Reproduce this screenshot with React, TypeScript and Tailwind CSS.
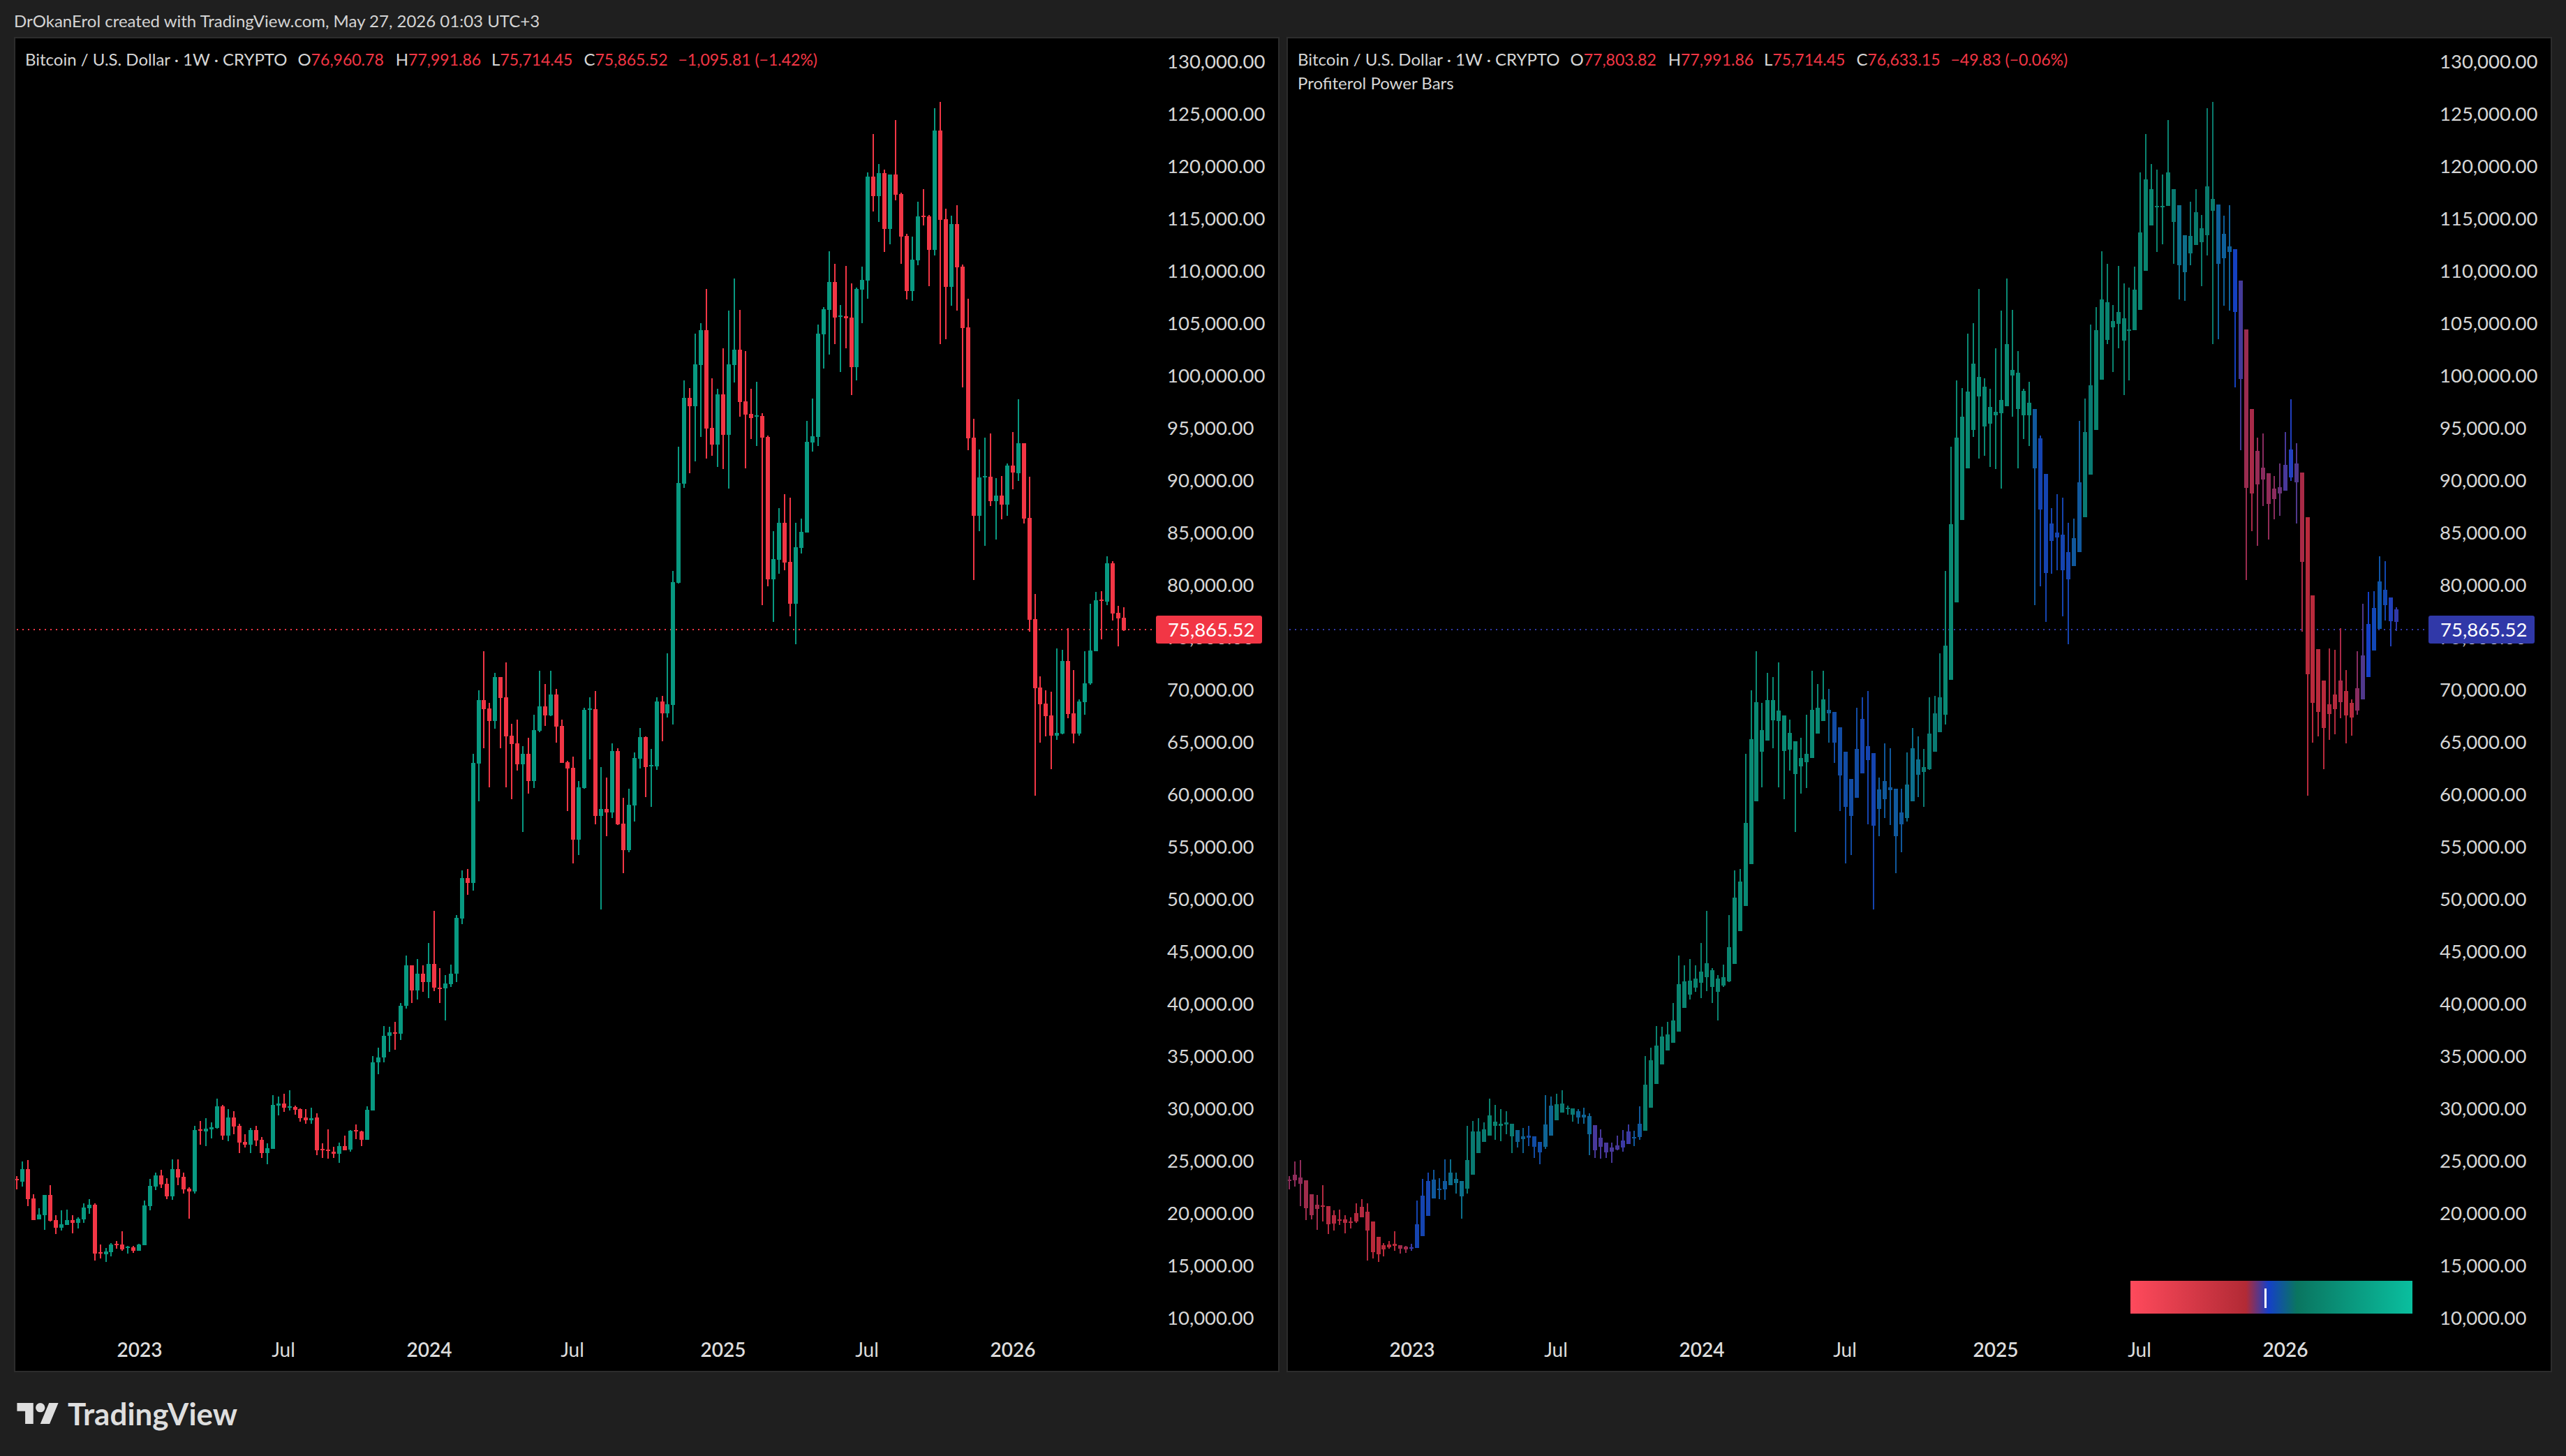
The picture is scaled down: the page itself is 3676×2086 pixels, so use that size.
type Candle = { up: number; h: number; t: number; b: number; l: number };
type Row = number[];

const GREEN = "#089981";
const RED = "#f23645";
const INDIGO = "#3038a8";

// rows are [up, high, bodyTop, bodyBottom, low], read off in screen px
const read = (rows: Row[], top: number, k: number): Candle[] =>
  rows.map(([up, h, t, b, l]) => ({
    up,
    h: Math.round(top + h / k),
    t: Math.round(top + t / k),
    b: Math.round(top + b / k),
    l: Math.round(top + l / k),
  }));

const candles: Candle[] = [
  ...read(
    [
      [0, 1157, 1166, 1171, 1207], [1, 1100, 1129, 1177, 1196], [0, 1095, 1129, 1244, 1270], [0, 1225, 1241, 1323, 1323],
      [1, 1278, 1302, 1321, 1321], [1, 1228, 1228, 1305, 1361], [0, 1191, 1228, 1327, 1329], [0, 1305, 1323, 1353, 1377],
      [1, 1286, 1339, 1353, 1363], [1, 1284, 1323, 1342, 1342], [0, 1305, 1323, 1334, 1374], [1, 1313, 1318, 1334, 1355],
      [1, 1260, 1276, 1321, 1334], [1, 1244, 1265, 1278, 1300], [0, 1260, 1265, 1451, 1478], [0, 1417, 1445, 1450, 1470],
      [1, 1430, 1442, 1454, 1483], [1, 1411, 1417, 1446, 1462], [0, 1403, 1414, 1418, 1432], [0, 1366, 1417, 1436, 1440],
      [1, 1422, 1425, 1428, 1451], [0, 1422, 1427, 1440, 1448], [1, 1414, 1417, 1440, 1440], [1, 1249, 1268, 1419, 1419],
      [1, 1167, 1193, 1270, 1286], [1, 1143, 1153, 1196, 1209], [0, 1132, 1153, 1188, 1201], [0, 1164, 1185, 1233, 1244],
      [1, 1092, 1129, 1233, 1246], [0, 1092, 1129, 1161, 1191], [0, 1143, 1159, 1207, 1223], [0, 1199, 1204, 1215, 1318],
      [1, 965, 981, 1215, 1223], [0, 946, 978, 983, 1036], [1, 935, 975, 987, 1042], [1, 951, 970, 977, 1013],
      [1, 861, 890, 973, 975], [0, 885, 890, 1002, 1018], [1, 901, 933, 1002, 1023], [0, 909, 933, 967, 997],
      [0, 957, 965, 1029, 1068], [0, 997, 1026, 1036, 1047], [1, 973, 981, 1036, 1068], [0, 965, 981, 1021, 1042],
      [0, 1007, 1018, 1068, 1087], [1, 1031, 1050, 1068, 1111], [1, 849, 885, 1052, 1052], [1, 853, 881, 887, 925],
      [0, 842, 881, 897, 912], [1, 829, 890, 894, 906], [0, 888, 894, 903, 922], [0, 898, 901, 935, 949],
      [0, 901, 933, 943, 957], [1, 896, 935, 943, 957], [0, 917, 933, 1058, 1076], [0, 1031, 1052, 1057, 1087],
      [0, 978, 1055, 1059, 1090], [0, 1044, 1063, 1071, 1087], [1, 1029, 1042, 1071, 1106], [0, 1002, 1042, 1057, 1057],
      [1, 982, 983, 1055, 1063], [0, 959, 981, 986, 1015], [0, 983, 986, 1018, 1042], [1, 890, 904, 1018, 1018],
      [1, 699, 723, 906, 906],
    ],
    1250,
    2.658,
  ),
  ...read(
    [
      [1, 1501, 1515, 1522, 1539], [1, 1470, 1484, 1515, 1522], [1, 1471, 1479, 1484, 1507], [0, 1464, 1479, 1481, 1504],
      [1, 1437, 1441, 1481, 1490], [1, 1369, 1383, 1441, 1445], [0, 1383, 1383, 1419, 1437], [1, 1374, 1395, 1419, 1432],
      [0, 1383, 1395, 1407, 1421], [1, 1351, 1381, 1407, 1430], [0, 1305, 1381, 1415, 1420], [0, 1387, 1415, 1417, 1437],
      [1, 1397, 1409, 1416, 1462], [1, 1382, 1395, 1410, 1414], [1, 1311, 1315, 1395, 1407],
    ],
    0,
    1,
  ),
  ...read(
    [
      [1, 1101, 1134, 1308, 1332], [0, 1095, 1134, 1155, 1206], [1, 600, 639, 1155, 1188], [1, 327, 369, 642, 804],
      [0, 159, 369, 408, 576], [0, 381, 405, 459, 744], [1, 252, 270, 459, 492], [0, 270, 270, 360, 576],
      [0, 207, 357, 525, 744], [0, 471, 522, 558, 795], [0, 453, 555, 645, 672], [1, 567, 600, 645, 936],
      [0, 531, 600, 717, 771], [1, 432, 498, 717, 747], [1, 243, 396, 501, 507], [0, 300, 396, 435, 480],
      [1, 243, 345, 435, 438], [0, 321, 345, 483, 552], [0, 453, 480, 639, 639], [0, 630, 636, 663, 846],
      [0, 612, 660, 969, 1071], [1, 717, 744, 969, 1035], [1, 402, 411, 747, 750], [1, 357, 405, 411, 624],
      [0, 330, 408, 867, 903], [1, 657, 837, 867, 1269], [0, 702, 837, 852, 954], [1, 555, 588, 852, 876],
      [0, 576, 588, 903, 906], [0, 789, 900, 1014, 1113], [1, 750, 819, 1014, 1023], [1, 594, 618, 822, 891],
      [1, 489, 528, 621, 663], [0, 525, 528, 657, 786], [1, 579, 648, 654, 828], [1, 357, 375, 654, 669],
      [0, 351, 375, 426, 546], [1, 168, 387, 426, 444],
    ],
    880,
    3,
  ),
  ...read([[1, 818, 834, 1010, 1038]], 0, 1),
  ...read(
    [
      [1, 639, 790, 1205, 1208], [1, 363, 436, 793, 810], [0, 395, 436, 470, 749], [1, 168, 296, 470, 700],
      [1, 125, 154, 299, 598], [0, -17, 154, 563, 688], [0, 354, 560, 630, 677], [1, 398, 421, 630, 723],
      [0, 229, 421, 589, 732], [1, 73, 296, 589, 813], [1, -61, 235, 299, 372], [0, 70, 235, 453, 514],
      [0, 241, 450, 505, 729], [0, 398, 502, 520, 607], [1, 369, 508, 513, 636], [0, 500, 511, 601, 1298],
      [0, 592, 598, 1191, 1220], [1, 990, 1106, 1191, 1368], [1, 894, 955, 1109, 1167], [0, 836, 955, 1121, 1153],
      [0, 851, 1118, 1292, 1344], [1, 955, 1057, 1292, 1461], [1, 938, 993, 1060, 1083], [1, 531, 618, 996, 996],
      [1, 438, 595, 621, 659], [1, 131, 168, 598, 636], [1, 58, 67, 171, 314],
    ],
    420,
    2.904,
  ),
  ...read(
    [
      [1, 720, 852, 972, 1164], [0, 774, 852, 1005, 1119], [1, 951, 996, 1002, 1239], [0, 783, 999, 1008, 1137],
      [0, 858, 1005, 1218, 1338], [1, 876, 882, 1218, 1275], [1, 786, 843, 885, 1029], [1, 381, 399, 846, 924],
      [0, 216, 399, 483, 549], [1, 345, 384, 483, 594], [0, 369, 384, 624, 723], [1, 390, 390, 624, 690],
      [0, 156, 390, 477, 501], [0, 468, 474, 657, 774], [0, 645, 654, 891, 927], [1, 657, 756, 891, 933],
      [1, 507, 570, 759, 780], [0, 453, 567, 573, 609], [0, 564, 570, 714, 870], [1, 105, 201, 714, 738],
      [0, 78, 201, 585, 1119], [0, 537, 582, 873, 1098], [1, 567, 603, 873, 954], [0, 522, 603, 789, 975],
      [0, 777, 786, 1050, 1305],
    ],
    120,
    3,
  ),
  ...read(
    [
      [0, 23, 142, 604, 653], [0, 523, 601, 926, 1193], [1, 650, 767, 926, 990], [1, 601, 761, 767, 1051],
      [0, 584, 764, 865, 886], [1, 769, 842, 865, 1025], [0, 761, 842, 880, 941],
    ],
    420,
    2.904,
  ),
  ...read(
    [
      [1, 664, 667, 723, 739], [0, 619, 667, 677, 701], [1, 572, 635, 678, 689], [0, 635, 635, 743, 750],
      [0, 683, 742, 888, 905], [0, 851, 887, 986, 1140],
    ],
    0,
    1,
  ),
  ...read(
    [
      [0, 267, 315, 387, 552], [0, 327, 384, 438, 525], [0, 333, 435, 522, 666], [1, 147, 510, 522, 540],
      [1, 153, 201, 513, 516], [0, 60, 201, 429, 447], [0, 240, 426, 513, 555], [1, 366, 375, 513, 522],
      [1, 159, 297, 378, 432],
    ],
    880,
    3,
  ),
  ...read(
    [
      [1, 865, 932, 979, 981], [1, 848, 860, 933, 933], [0, 847, 859, 861, 916], [1, 797, 807, 862, 867],
      [0, 804, 807, 879, 889], [0, 868, 878, 886, 926], [0, 870, 885, 903, 904],
    ],
    0,
    1,
  ),
];

// second chart is the same weeks as heikin ashi
function heikinAshi(src: Candle[]): Candle[] {
  let prevO = (src[0].t + src[0].b) / 2;
  let prevC = prevO;
  return src.map((c) => {
    const o = c.up ? c.b : c.t;
    const cl = c.up ? c.t : c.b;
    const haC = (o + c.h + c.l + cl) / 4;
    const haO = (prevO + prevC) / 2;
    prevO = haO;
    prevC = haC;
    return {
      up: haC < haO ? 1 : 0,
      h: Math.round(Math.min(c.h, haO, haC)),
      t: Math.round(Math.min(haO, haC)),
      b: Math.round(Math.max(haO, haC)),
      l: Math.round(Math.max(c.l, haO, haC)),
    };
  });
}

// power colour per run of weeks: [first index, colour]
const powerRuns: [number, string][] = [
  [0, "#8e2c5a"], [3, "#a02c4c"], [6, "#b42a40"], [15, "#b82a3a"], [20, "#a02c4c"], [22, "#3c3aa4"], [23, "#1544b0"],
  [26, "#10589c"], [29, "#0c6e8c"], [32, "#0a7a72"], [36, "#0a8470"], [39, "#0a7a72"], [41, "#0e6090"], [43, "#124ca4"],
  [46, "#0e6494"], [48, "#0a7a72"], [52, "#0e6494"], [55, "#48389a"], [60, "#3c3aa4"], [62, "#10589c"], [64, "#0a7f6c"],
  [66, "#0a8470"], [80, "#0a8a74"], [97, "#0e6090"], [98, "#124ca4"], [103, "#1544b0"], [106, "#10589c"], [111, "#0c6e8c"],
  [114, "#0a7a72"], [118, "#0a8a74"], [134, "#10589c"], [135, "#1544b0"], [141, "#10589c"], [143, "#0a7a72"], [145, "#0a8470"],
  [159, "#0a7a70"], [160, "#0e6e8a"], [162, "#0a7a7a"], [163, "#0a7a6c"], [167, "#0e5f9a"], [170, "#1440c0"], [171, "#443a98"],
  [172, "#9a2c50"], [173, "#a82a48"], [174, "#962c56"], [175, "#8a2c60"], [176, "#922c58"], [177, "#8c2c5e"], [178, "#6a3478"],
  [179, "#48389a"], [180, "#2240c0"], [181, "#50388c"], [182, "#a82a46"], [183, "#b82a3c"], [187, "#b02a40"], [188, "#b42a3e"],
  [189, "#aa2a48"], [190, "#b82a3c"], [192, "#882c60"], [193, "#50388c"], [194, "#1440c8"], [195, "#1248b8"], [196, "#0e54a8"],
  [197, "#1248b0"], [198, "#2040b8"], [199, "#3038a8"],
];

function powerColor(i: number) {
  let color = powerRuns[0][1];
  for (const [start, hex] of powerRuns) if (i >= start) color = hex;
  return color;
}

const prices = Array.from({ length: 25 }, (_, i) => (130000 - i * 5000).toLocaleString("en-US", { minimumFractionDigits: 2 }));

const timeLabels = [
  { text: "2023", cls: "ml-[128px] font-semibold" },
  { text: "Jul", cls: "ml-[106px]" },
  { text: "2024", cls: "ml-[109px] font-semibold" },
  { text: "Jul", cls: "ml-[105px]" },
  { text: "2025", cls: "ml-[116px] font-semibold" },
  { text: "Jul", cls: "ml-[106px]" },
  { text: "2026", cls: "ml-[109px] font-semibold" },
];

function Chart({ data, color, line }: { data: Candle[]; color: (c: Candle, i: number) => string; line: string }) {
  return (
    <svg width="1650" height="1847" viewBox="22 55 1650 1847" className="block">
      <line x1="24" x2="1656" y1="902" y2="902" stroke={line} strokeWidth="2" strokeDasharray="2 6" />
      {data.map((c, i) => {
        const x = Math.round(24 + 7.97 * i);
        const fill = color(c, i);
        return (
          <g key={i} fill={fill}>
            <rect x={x - 1} y={c.h} width="2" height={c.l - c.h} />
            <rect x={x - 3} y={c.t} width="6" height={Math.max(2, c.b - c.t)} />
          </g>
        );
      })}
    </svg>
  );
}

function Pane({
  legend,
  study,
  data,
  color,
  line,
  labelBg,
  children,
}: {
  legend: string[];
  study?: string;
  data: Candle[];
  color: (c: Candle, i: number) => string;
  line: string;
  labelBg: string;
  children?: React.ReactNode;
}) {
  const [o, h, l, c, change] = legend;
  return (
    <div className="relative flex h-full w-[1813px] overflow-hidden border-2 border-[#2c2c2c] bg-black">
      <div className="flex w-[1650px] flex-col">
        <Chart data={data} color={color} line={line} />
        <div className="flex h-[62px] items-center text-[28px] text-[#dcdcdc]">
          {timeLabels.map((t, i) => (
            <div key={i} className={`w-[100px] shrink-0 text-center ${t.cls}`}>
              {t.text}
            </div>
          ))}
        </div>
      </div>
      <div className="flex flex-col gap-[45px] pt-[18px] text-[27.5px] leading-[30px] text-[#d6d6d6]">
        {prices.map((p) => (
          <div key={p}>{p}</div>
        ))}
      </div>
      <div className="absolute left-[14px] top-[18px] flex flex-col gap-[10px] text-[24px] leading-[24px] text-[#d6d6d6]">
        <div className="flex items-baseline">
          <span className="mr-[15px]">Bitcoin / U.S. Dollar · 1W · CRYPTO</span>
          <span className="mr-[17px]">O<span className="text-[23px] text-[#f23645]">{o}</span></span>
          <span className="mr-[15px]">H<span className="text-[23px] text-[#f23645]">{h}</span></span>
          <span className="mr-[16px]">L<span className="text-[23px] text-[#f23645]">{l}</span></span>
          <span className="mr-[15px]">C<span className="text-[23px] text-[#f23645]">{c}</span></span>
          <span className="text-[23px] text-[#f23645]">{change}</span>
        </div>
        {study && <div>{study}</div>}
      </div>
      <div
        className={`absolute left-[1634px] top-[827px] flex h-[40px] w-[152px] items-center rounded-[3px] pl-[17px] text-[27.5px] text-white ${labelBg}`}
      >
        75,865.52
      </div>
      {children}
    </div>
  );
}

export default function App() {
  return (
    <div className="flex h-[2086px] w-[3676px] flex-col bg-[#1f1f1f] font-[Lato,sans-serif]">
      <div className="flex h-[53px] shrink-0 items-center pl-[20px] pt-[6px] text-[24px] text-[#d4d4d4]">
        DrOkanErol created with TradingView.com, May 27, 2026 01:03 UTC+3
      </div>
      <div className="flex h-[1913px] shrink-0 gap-[10px] pl-[20px]">
        <Pane
          legend={["76,960.78", "77,991.86", "75,714.45", "75,865.52", "−1,095.81 (−1.42%)"]}
          data={candles}
          color={(c) => (c.up ? GREEN : RED)}
          line={RED}
          labelBg="bg-[#f23645]"
        />
        <Pane
          legend={["77,803.82", "77,991.86", "75,714.45", "76,633.15", "−49.83 (−0.06%)"]}
          study="Profiterol Power Bars"
          data={heikinAshi(candles)}
          color={(_, i) => powerColor(i)}
          line={INDIGO}
          labelBg="bg-[#3038a8]"
        >
          <div className="absolute left-[1207px] top-[1780px] h-[47px] w-[404px] bg-[linear-gradient(90deg,#ff4a5c_0%,#b22a35_41%,#1540c8_49%,#0a7560_59%,#0abf9f_100%)]">
            <div className="absolute left-[192px] top-[11px] h-[28px] w-[3px] bg-white" />
          </div>
        </Pane>
      </div>
      <div className="flex flex-1 items-start pl-[24px] pt-[34px] text-[#dedede]">
        <svg width="60" height="30" viewBox="0 4 35.5 18" fill="currentColor" className="mt-[10px]">
          <path d="M14 22H7V11H0V4h14v18zM28 22h-8l7.5-18h8L28 22z" />
          <circle cx="20" cy="8" r="4" />
        </svg>
        <span className="ml-[13px] text-[44px] font-bold leading-[50px]">TradingView</span>
      </div>
    </div>
  );
}
